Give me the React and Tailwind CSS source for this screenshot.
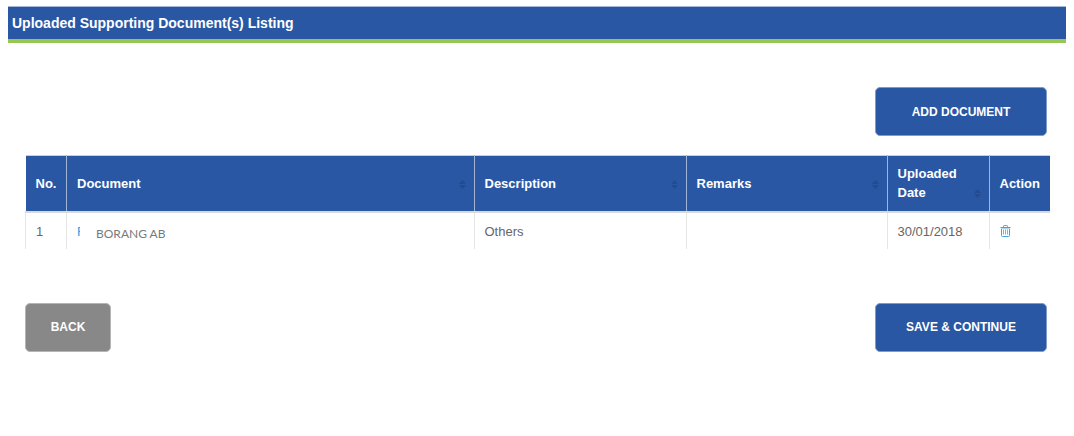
const button =
  'h-[49px] rounded-[5px] border text-xs font-bold uppercase text-white cursor-pointer';
const primary = 'w-[172px] border-[#7f9bcb] bg-[#2957a4]';

function SortIcon() {
  return (
    <svg viewBox="0 0 7 9" className="h-[9px] w-[7px] shrink-0" fill="#234c90" aria-hidden="true">
      <path d="M3.5 0 7 4H0zM0 5h7L3.5 9z" />
    </svg>
  );
}

function TrashIcon() {
  return (
    <svg viewBox="0 0 11 12" className="h-3 w-[11px]" fill="none" stroke="#3ea5df" aria-hidden="true">
      <path d="M3.5 2.5V1.3q0-.8.8-.8h2.4q.8 0 .8.8v1.2M.5 2.5h10M1.5 3v7.5q0 1 1 1h6q1 0 1-1V3" />
      <path d="M3.5 4.5v5M5.5 4.5v5M7.5 4.5v5" stroke="#6bbbe8" />
      <path d="M1 3.5h9" stroke="#a9d8f1" />
    </svg>
  );
}

function HeadCell({ children, sortable, className = '' }) {
  return (
    <th
      scope="col"
      className={`border-x border-[#a3b5d6] py-2 pr-2 pl-[10px] text-left align-middle font-bold last:border-r-0 first:border-l-0 ${className}`}
    >
      {sortable ? (
        <div className="flex items-end justify-between">
          <span>{children}</span>
          <span className="mb-1">
            <SortIcon />
          </span>
        </div>
      ) : (
        children
      )}
    </th>
  );
}

function Cell({ children }) {
  return (
    <td className="border-l border-[#e6e6e6] pt-[9px] pr-2 pb-2 pl-[10px] align-top">{children}</td>
  );
}

export default function App() {
  return (
    <main className="bg-white px-2 pt-[6px] pb-20 font-['Liberation_Sans',Arial,sans-serif] text-[13px] leading-[19px] text-[#666]">
      <h1 className="border-t border-b-4 border-t-[#a3b7d9] border-b-[#97c653] bg-[#2957a4] px-1 py-[6px] text-sm leading-5 font-bold text-white">
        Uploaded Supporting Document(s) Listing
      </h1>

      <div className="pt-[44px] pr-4 pl-[17px]">
        <div className="flex justify-end pr-[3px]">
          <button type="button" className={`${button} ${primary}`}>
            Add Document
          </button>
        </div>

        <table className="mt-[19px] w-full table-fixed border-collapse">
          <thead>
            <tr className="h-[56px] border-t border-b-2 border-t-[#c9cdd4] border-b-[#d9d9d9] bg-[#2957a4] text-white">
              <HeadCell className="w-[41px]">No.</HeadCell>
              <HeadCell sortable>Document</HeadCell>
              <HeadCell sortable className="w-[212px]">
                Description
              </HeadCell>
              <HeadCell sortable className="w-[201px]">
                Remarks
              </HeadCell>
              <HeadCell sortable className="w-[102px]">
                Uploaded Date
              </HeadCell>
              <HeadCell className="w-[61px]">Action</HeadCell>
            </tr>
          </thead>
          <tbody>
            <tr>
              <Cell>1</Cell>
              <Cell>
                <div className="flex gap-4">
                  <a href="#document" className="w-[3px] overflow-hidden text-[#2f9fe0]">
                    F
                  </a>
                  <span className="pt-[5px] font-[Lato,sans-serif] text-xs leading-[14px] text-[#7a7a7a]">
                    BORANG AB
                  </span>
                </div>
              </Cell>
              <Cell>Others</Cell>
              <Cell />
              <Cell>30/01/2018</Cell>
              <Cell>
                <button type="button" aria-label="Delete document" className="block cursor-pointer pt-[3px]">
                  <TrashIcon />
                </button>
              </Cell>
            </tr>
          </tbody>
        </table>

        <div className="mt-[54px] flex items-start justify-between pr-[3px]">
          <button type="button" className={`${button} w-[86px] border-[#b5b5b5] bg-[#888]`}>
            Back
          </button>
          <button type="button" className={`${button} ${primary}`}>
            Save &amp; Continue
          </button>
        </div>
      </div>
    </main>
  );
}
